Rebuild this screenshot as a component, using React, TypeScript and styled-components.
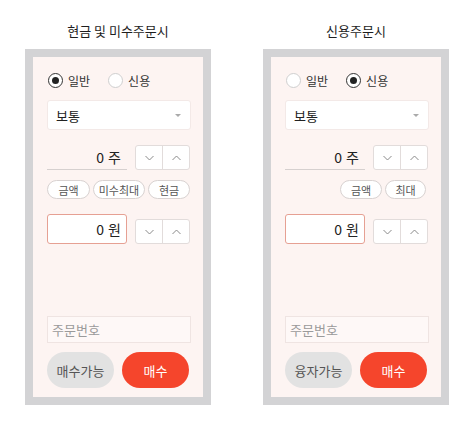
import React from "react";
import styled, { createGlobalStyle } from "styled-components";

const Global = createGlobalStyle`
  html, body { margin: 0; padding: 0; background: #ffffff; }
  body { font-family: "Noto Sans CJK KR", "Noto Sans", sans-serif; color: #222; }
  * { box-sizing: border-box; }
`;

const Page = styled.div`
  display: flex;
  justify-content: center;
  gap: 52px;
  padding-top: 22px;
  width: 474px;
`;

const Column = styled.div`
  width: 186px;
  display: flex;
  flex-direction: column;
  align-items: center;
`;

const Title = styled.div`
  font-size: 13px;
  line-height: 18px;
  height: 18px;
  color: #1e1e1e;
  margin-bottom: 9px;
`;

const Panel = styled.div`
  width: 186px;
  height: 356px;
  border: 8px solid #d3d3d5;
  background: #fdf4f2;
  padding: 15px 12px 9px 14px;
  display: flex;
  flex-direction: column;
`;

const RadioRow = styled.div`
  display: flex;
  align-items: center;
  height: 16px;
  gap: 18px;
  padding-left: 1px;
`;

const RadioItem = styled.label`
  display: flex;
  align-items: center;
  gap: 5px;
  font-size: 12px;
  color: #333;
`;

const RadioCircle = styled.span<{ $checked?: boolean }>`
  width: 15px;
  height: 15px;
  border-radius: 50%;
  background: #fff;
  border: 1px solid ${(p) => (p.$checked ? "#333" : "#cfcfcf")};
  display: flex;
  align-items: center;
  justify-content: center;
  &::after {
    content: "";
    width: 7px;
    height: 7px;
    border-radius: 50%;
    background: ${(p) => (p.$checked ? "#222" : "transparent")};
  }
`;

const Select = styled.div`
  margin-top: 12px;
  height: 30px;
  background: #fff;
  border: 1px solid #f3e9e7;
  border-radius: 3px;
  display: flex;
  align-items: center;
  justify-content: space-between;
  padding: 0 9px 0 8px;
  font-size: 13px;
  color: #222;
`;

const Caret = styled.span`
  width: 0;
  height: 0;
  border-left: 3px solid transparent;
  border-right: 3px solid transparent;
  border-top: 3px solid #aaa;
`;

const FieldRow = styled.div<{ $mt: number }>`
  margin-top: ${(p) => p.$mt}px;
  display: flex;
  align-items: flex-end;
  gap: 8px;
`;

const QtyField = styled.div`
  width: 80px;
  height: 25px;
  border-bottom: 1px solid #d6d0cf;
  display: flex;
  align-items: center;
  justify-content: flex-end;
  padding-right: 6px;
  font-size: 14px;
  color: #222;
`;

const PriceField = styled.div`
  width: 80px;
  height: 30px;
  background: #fff;
  border: 1px solid #e6a093;
  border-radius: 3px;
  display: flex;
  align-items: center;
  justify-content: flex-end;
  padding-right: 5px;
  font-size: 14px;
  color: #222;
`;

const Unit = styled.span`
  margin-left: 4px;
`;

const Spinner = styled.div`
  width: 55px;
  height: 25px;
  background: #fff;
  border: 1px solid #e2dcdb;
  border-radius: 3px;
  display: flex;
`;

const SpinBtn = styled.div`
  flex: 1;
  display: flex;
  align-items: center;
  justify-content: center;
  & + & {
    border-left: 1px solid #e2dcdb;
  }
`;

const Chips = styled.div<{ $end?: boolean }>`
  margin-top: 10px;
  display: flex;
  gap: 3px;
  justify-content: ${(p) => (p.$end ? "flex-end" : "flex-start")};
  padding-right: ${(p) => (p.$end ? "3px" : "0")};
`;

const Chip = styled.div<{ $w: number }>`
  width: ${(p) => p.$w}px;
  height: 19px;
  border: 1px solid #d8d2d1;
  border-radius: 10px;
  background: #fff;
  display: flex;
  align-items: center;
  justify-content: center;
  font-size: 11px;
  color: #555;
`;

const Spacer = styled.div`
  flex: 1;
`;

const OrderNo = styled.div`
  height: 27px;
  border: 1px solid #efe4e2;
  background: #fef8f7;
  display: flex;
  align-items: center;
  padding-left: 4px;
  font-size: 13px;
  color: #9a9a9a;
`;

const Buttons = styled.div`
  margin-top: 9px;
  display: flex;
  gap: 8px;
`;

const PillButton = styled.div<{ $primary?: boolean }>`
  width: 67px;
  height: 36px;
  border-radius: 18px;
  background: ${(p) => (p.$primary ? "#f5452c" : "#e2e2e2")};
  color: ${(p) => (p.$primary ? "#fff" : "#555")};
  display: flex;
  align-items: center;
  justify-content: center;
  font-size: 13px;
`;

const Chevron = ({ up }: { up?: boolean }) => (
  <svg width="9" height="6" viewBox="0 0 9 6">
    <polyline
      points={up ? "0.5,5 4.5,1 8.5,5" : "0.5,1 4.5,5 8.5,1"}
      fill="none"
      stroke="#8a8a8a"
      strokeWidth="1"
    />
  </svg>
);

const SpinnerBox = () => (
  <Spinner>
    <SpinBtn>
      <Chevron />
    </SpinBtn>
    <SpinBtn>
      <Chevron up />
    </SpinBtn>
  </Spinner>
);

type OrderPanelProps = {
  title: string;
  credit?: boolean;
  chips: { label: string; w: number }[];
  leftButton: string;
};

const OrderPanel = ({ title, credit, chips, leftButton }: OrderPanelProps) => (
  <Column>
    <Title>{title}</Title>
    <Panel>
      <RadioRow>
        <RadioItem>
          <RadioCircle $checked={!credit} />
          일반
        </RadioItem>
        <RadioItem>
          <RadioCircle $checked={credit} />
          신용
        </RadioItem>
      </RadioRow>
      <Select>
        보통
        <Caret />
      </Select>
      <FieldRow $mt={15}>
        <QtyField>
          0<Unit>주</Unit>
        </QtyField>
        <SpinnerBox />
      </FieldRow>
      <Chips $end={credit}>
        {chips.map((c) => (
          <Chip key={c.label} $w={c.w}>
            {c.label}
          </Chip>
        ))}
      </Chips>
      <FieldRow $mt={15}>
        <PriceField>
          0<Unit>원</Unit>
        </PriceField>
        <SpinnerBox />
      </FieldRow>
      <Spacer />
      <OrderNo>주문번호</OrderNo>
      <Buttons>
        <PillButton>{leftButton}</PillButton>
        <PillButton $primary>매수</PillButton>
      </Buttons>
    </Panel>
  </Column>
);

export default function App() {
  return (
    <>
      <Global />
      <Page>
        <OrderPanel
          title="현금 및 미수주문시"
          chips={[
            { label: "금액", w: 43 },
            { label: "미수최대", w: 52 },
            { label: "현금", w: 42 },
          ]}
          leftButton="매수가능"
        />
        <OrderPanel
          title="신용주문시"
          credit
          chips={[
            { label: "금액", w: 42 },
            { label: "최대", w: 41 },
          ]}
          leftButton="융자가능"
        />
      </Page>
    </>
  );
}
